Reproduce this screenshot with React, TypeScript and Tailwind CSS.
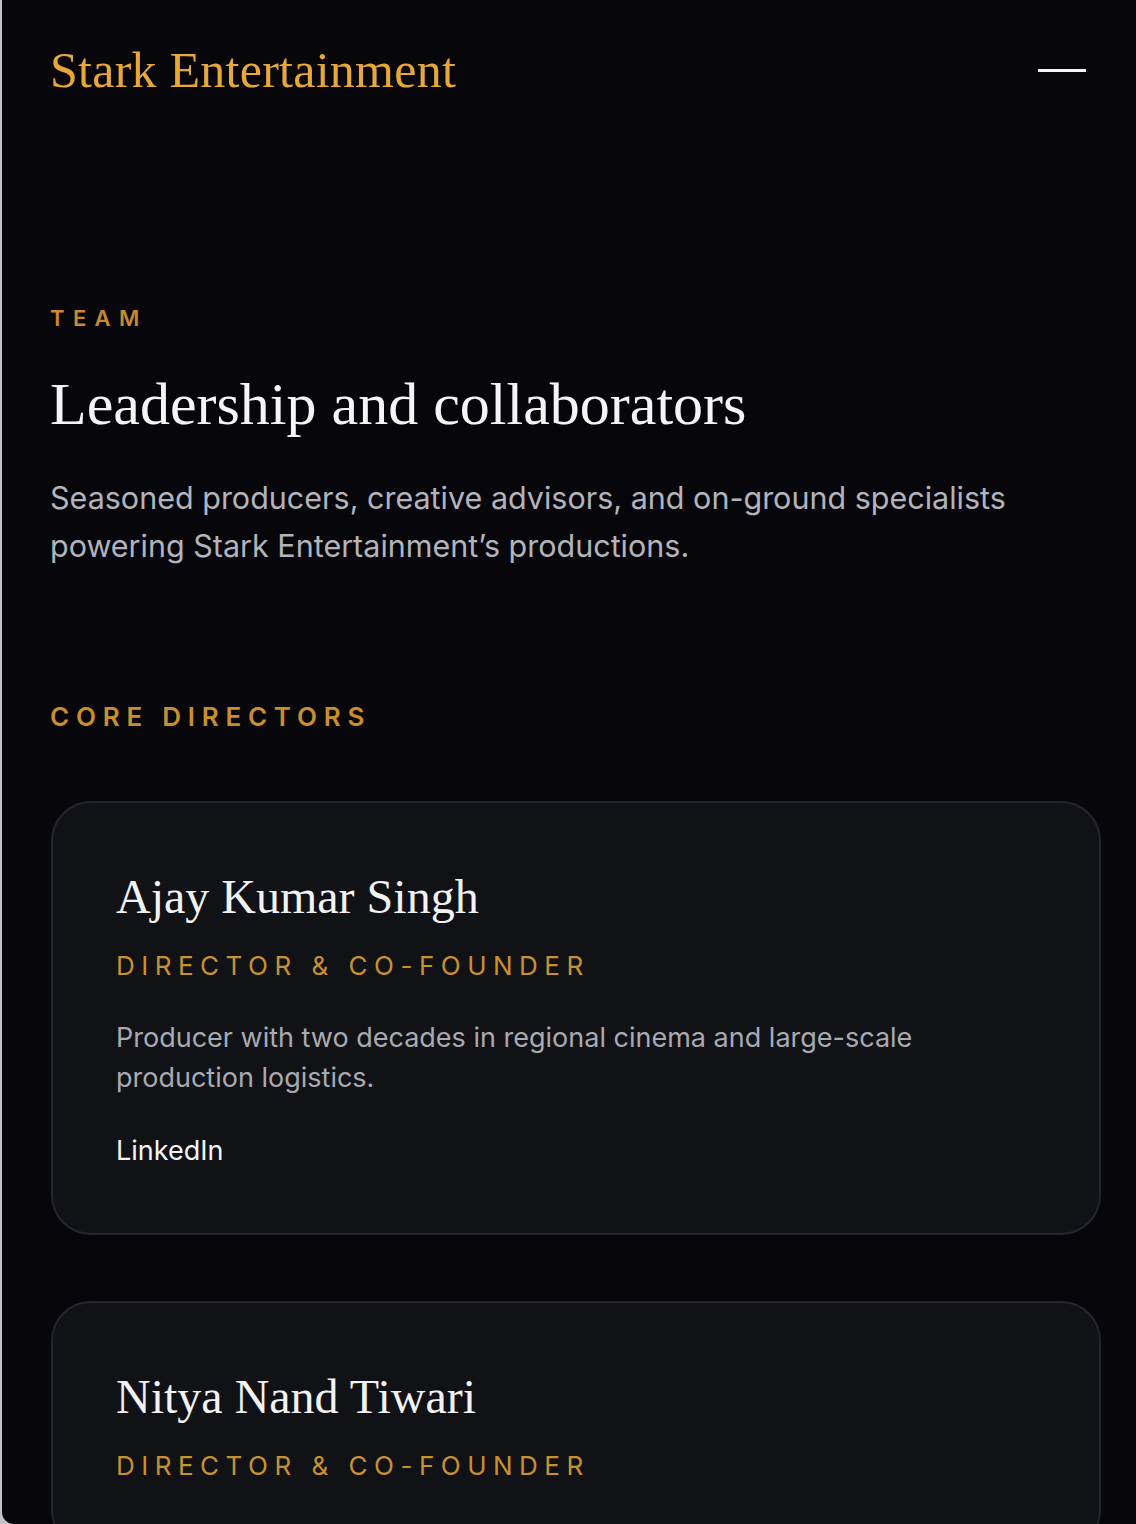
const serif = "font-['Liberation_Serif','Times_New_Roman',serif]";
const sans = "font-['Inter','Noto_Sans',sans-serif]";

const directors = [
  {
    name: "Ajay Kumar Singh",
    role: "Director & Co-Founder",
    bio: "Producer with two decades in regional cinema and large-scale production logistics.",
    linkedin: true,
  },
  {
    name: "Nitya Nand Tiwari",
    role: "Director & Co-Founder",
    bio: "",
    linkedin: false,
  },
];

type Director = { name: string; role: string; bio: string; linkedin: boolean };

const DirectorCard = ({ name, role, bio, linkedin }: Director) => (
  <article className="rounded-[40px] border-2 border-[#25262b] bg-[#111216] pl-[63px] pr-[66px] pt-[70px] pb-[69px]">
    <h3 className={`${serif} text-[48px] leading-none text-[#f2f2f4]`}>{name}</h3>
    <p className={`${sans} mt-[32px] text-[26px] leading-none uppercase tracking-[0.25em] text-[#c8912e]`}>
      {role}
    </p>
    {bio && (
      <p className={`${sans} mt-[39px] text-[27px] leading-[40px] text-[#a9aab1]`}>{bio}</p>
    )}
    {linkedin && (
      <a href="#" className={`${sans} mt-[39px] block text-[27px] leading-none text-[#f4f4f6]`}>
        LinkedIn
      </a>
    )}
  </article>
);

export default function App() {
  return (
    <div className="h-[1524px] overflow-hidden bg-[#c4c4c6] pl-[2px]">
      <div className="h-full rounded-bl-[12px] bg-[#07070b]">
        {/* header */}
        <header className="flex h-[140px] items-center justify-between pl-[48px] pr-[50px]">
          <span className={`${serif} text-[50px] leading-none tracking-[0.005em] text-[#e8a838]`}>
            Stark Entertainment
          </span>
          <button aria-label="Menu" className="h-[3px] w-[48px] bg-[#f5f5f7]" />
        </header>

        <main className="pl-[48px] pr-[35px]">
          {/* intro */}
          <section className="mt-[167px]">
            <p className={`${sans} text-[22px] font-semibold leading-none tracking-[0.38em] text-[#c88a2c]`}>TEAM</p>
            <h1 className={`${serif} mt-[45px] text-[60px] leading-none text-[#f5f5f7]`}>
              Leadership and collaborators
            </h1>
            <p className={`${sans} mt-[40px] max-w-[1020px] text-[30.5px] leading-[48px] text-[#b3b4bb]`}>
              Seasoned producers, creative advisors, and on-ground specialists powering Stark Entertainment’s
              productions.
            </p>
          </section>

          {/* directors */}
          <section className="mt-[134px]">
            <h2 className={`${sans} text-[26px] font-semibold leading-none tracking-[0.26em] text-[#c98f2d]`}>
              CORE DIRECTORS
            </h2>
            <div className="mt-[71px] ml-px flex flex-col gap-[66px]">
              {directors.map((d) => (
                <DirectorCard key={d.name} {...d} />
              ))}
            </div>
          </section>
        </main>
      </div>
    </div>
  );
}
